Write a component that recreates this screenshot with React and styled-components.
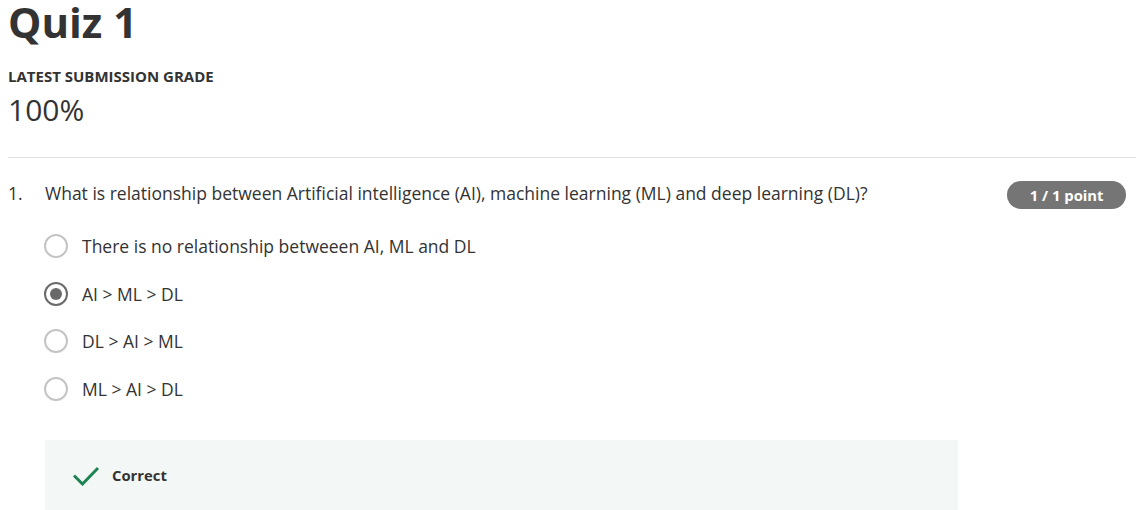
import React from 'react'
import styled, { createGlobalStyle } from 'styled-components'

const GlobalStyle = createGlobalStyle`
  body {
    margin: 0;
    background: #ffffff;
    font-family: "Open Sans", "Liberation Sans", sans-serif;
    color: #333333;
  }
`

const options = [
  'There is no relationship betweeen AI, ML and DL',
  'AI > ML > DL',
  'DL > AI > ML',
  'ML > AI > DL',
]

function App() {
  const selected = 1
  return (
    <>
      <GlobalStyle />
      <Page>
        <Header>
          <Title>Quiz 1</Title>
          <GradeLabel>LATEST SUBMISSION GRADE</GradeLabel>
          <GradeValue>100%</GradeValue>
        </Header>
        <Divider />
        <QuestionRow>
          <QuestionNumber>1.</QuestionNumber>
          <QuestionText>
            What is relationship between Artificial intelligence (AI), machine learning (ML) and deep learning (DL)?
          </QuestionText>
          <PointBadge>1 / 1 point</PointBadge>
        </QuestionRow>
        <OptionList>
          {options.map((opt, i) => (
            <OptionRow key={opt}>
              <Radio checked={i === selected} />
              <OptionText>{opt}</OptionText>
            </OptionRow>
          ))}
        </OptionList>
        <Feedback>
          <svg width="28" height="22" viewBox="0 0 28 22">
            <polyline points="2,11.5 10.5,20 26,4" fill="none" stroke="#1f8354" strokeWidth="3" />
          </svg>
          <FeedbackText>Correct</FeedbackText>
        </Feedback>
      </Page>
    </>
  )
}

export default App

const Page = styled.div`
  padding-left: 8px;
`

const Header = styled.div`
  display: flex;
  flex-direction: column;
`

const Title = styled.h1`
  margin: 0;
  padding-top: 2px;
  font-size: 42px;
  line-height: 40px;
  font-weight: 700;
  color: #333333;
`

const GradeLabel = styled.div`
  margin-top: 24px;
  font-size: 15px;
  line-height: 20px;
  font-weight: 700;
  color: #333333;
`

const GradeValue = styled.div`
  margin-top: 4px;
  font-size: 30px;
  line-height: 40px;
  font-weight: 400;
  color: #333333;
`

const Divider = styled.hr`
  margin: 27px 0 0;
  border: none;
  border-top: 1px solid #e1e1e1;
`

const QuestionRow = styled.div`
  display: flex;
  align-items: flex-start;
  margin-top: 23px;
  padding-right: 10px;
`

const QuestionNumber = styled.span`
  width: 37px;
  flex-shrink: 0;
  font-size: 17.5px;
  line-height: 24px;
`

const QuestionText = styled.p`
  flex: 1;
  margin: 0;
  font-size: 17.5px;
  line-height: 24px;
`

const PointBadge = styled.span`
  height: 28px;
  padding: 0 22.5px;
  border-radius: 14px;
  background: #757575;
  color: #ffffff;
  font-size: 14.8px;
  font-weight: 700;
  line-height: 28px;
  white-space: nowrap;
`

const OptionList = styled.div`
  display: flex;
  flex-direction: column;
  margin-top: 13px;
  padding-left: 36px;
`

const OptionRow = styled.label`
  display: flex;
  align-items: center;
  gap: 14px;
  padding: 12px 0 11.5px;
`

const Radio = styled.span`
  position: relative;
  width: 24px;
  height: 24px;
  box-sizing: border-box;
  border-radius: 50%;
  border: 2px solid ${p => (p.checked ? '#6a6a6a' : '#c4c4c4')};
  &::after {
    content: '';
    display: ${p => (p.checked ? 'block' : 'none')};
    position: absolute;
    left: 4px;
    top: 4px;
    width: 12px;
    height: 12px;
    border-radius: 50%;
    background: #6a6a6a;
  }
`

const OptionText = styled.span`
  font-size: 17.5px;
  line-height: 24px;
  color: #333333;
`

const Feedback = styled.div`
  display: flex;
  align-items: center;
  gap: 12px;
  width: 913px;
  box-sizing: border-box;
  margin: 28px 0 0 37px;
  padding: 24px 27px;
  background: #f3f8f6;
`

const FeedbackText = styled.span`
  font-size: 14.8px;
  line-height: 22px;
  font-weight: 700;
  color: #333333;
`
